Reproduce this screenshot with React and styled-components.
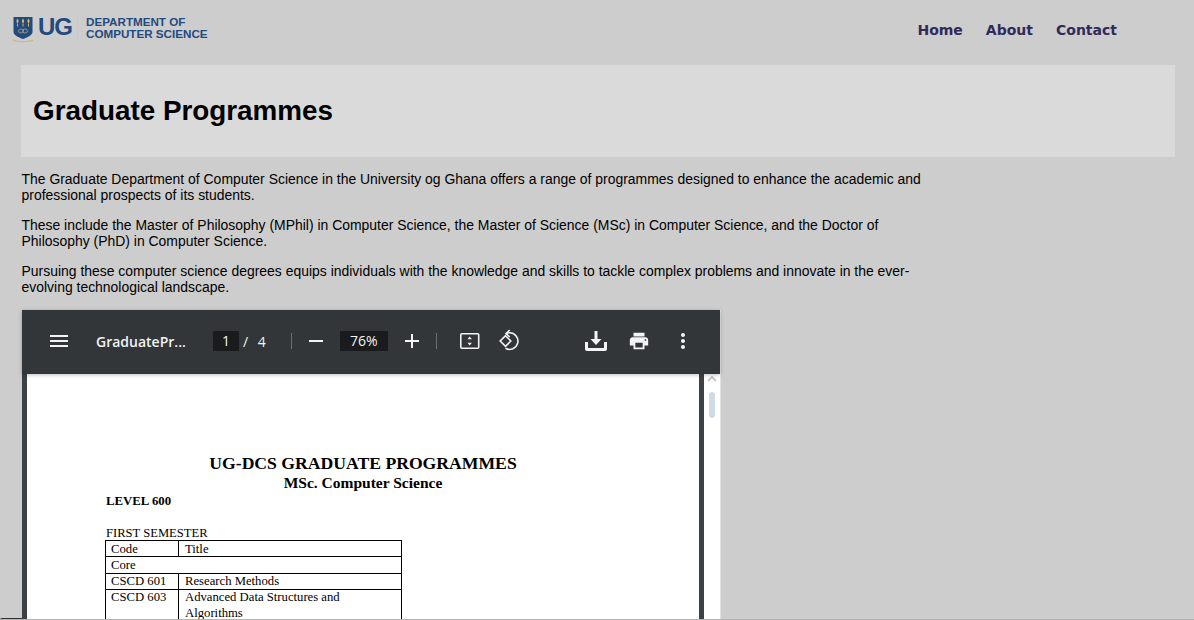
import React from "react";
import styled, { createGlobalStyle } from "styled-components";

const Global = createGlobalStyle`
  html, body { margin: 0; padding: 0; height: 620px; overflow: hidden; background: #cdcdcd; }
  #root { height: 620px; overflow: hidden; }
  * { box-sizing: border-box; }
`;
const Page = styled.div`
  height: 620px; overflow: hidden; display: flex; flex-direction: column; position: relative;
  font-family: "Liberation Sans", Arial, sans-serif; color: #000;
`;
const BottomEdge = styled.div`
  position: absolute; left: 0; right: 0; bottom: 0; height: 1px; background: #b4b4b4;
`;
const CornerShade = styled.div`
  position: absolute; left: 0; bottom: 0; width: 22px; height: 2px; background: #2e3134; border-top-left-radius: 2px;
`;
const Header = styled.header`
  height: 65px; flex: none; display: flex; justify-content: space-between; align-items: flex-start;
  padding: 15px 77px 0 12px;
`;
const Logo = styled.div`display: flex; align-items: flex-start;`;
const LogoMark = styled.span`
  font: bold 24px/23px "Liberation Sans", sans-serif; color: #234a7d; margin-left: 4px; width: 39px; letter-spacing: -1px;
`;
const LogoRule = styled.span`flex: none; width: 1px; height: 24px; background: #d3c9a8; margin: 1px 8px 0 0;`;
const LogoText = styled.div`
  font: bold 11.65px/12px "Liberation Sans", sans-serif; color: #234a7d; padding-top: 1px;
  span { display: block; white-space: nowrap; }
`;
const Nav = styled.nav`display: flex; gap: 23px; padding-top: 6px;`;
const NavLink = styled.a`
  font: bold 14px/18px "DejaVu Sans", Verdana, sans-serif; color: #2f2a5a;
`;
const Banner = styled.div`
  height: 92px; flex: none; margin: 0 19px 0 21px; padding: 0 12px; background: #dadada;
  display: flex; align-items: center;
`;
const Title = styled.h1`margin: 0; font: bold 27.84px/32px "Liberation Sans", sans-serif;`;
const Body = styled.main`padding: 14px 0 0 21.5px; flex: 1; min-height: 0;`;
const Para = styled.p`
  margin: 0 0 14px; width: 905px; font-size: 13.945px; line-height: 16px;
`;
const Viewer = styled.div`
  width: 699px; height: 320px; margin: 15px 0 0 0.5px; background: #3e4144; display: flex; flex-direction: column;
  border-right: 1px solid #e2e2e2;
`;
const Toolbar = styled.div`
  height: 64px; flex: none; padding-bottom: 2px; background: #323639; color: #f1f3f4; display: flex; align-items: center;
  position: relative; z-index: 1; box-shadow: 0 1px 4px rgba(0,0,0,.25);
  font-family: "Open Sans", "Noto Sans", sans-serif;
`;
const IconSlot = styled.span`
  display: flex; flex: none; width: ${p => p.$w || 24}px; margin-left: ${p => p.$ml || 0}px;
  align-items: center; justify-content: center;
`;
const FileName = styled.span`
  flex: none; width: 100px; margin-left: 25px; font-size: 14px; font-weight: 600; white-space: nowrap;
`;
const Field = styled.span`
  flex: none; height: 20px; width: ${p => p.$w}px; margin-left: ${p => p.$ml}px; background: #191b1c;
  font-size: 14px; line-height: 20px; text-align: center;
`;
const PageOf = styled.span`flex: none; margin-left: 4px; font-size: 14px; word-spacing: 6px;`;
const Sep = styled.span`flex: none; width: 1px; height: 16px; background: #6b6f72; margin-left: ${p => p.$ml}px;`;
const Stage = styled.div`flex: 1; min-height: 0; display: flex; overflow: hidden;`;
const Sheet = styled.div`
  flex: none; width: 672px; margin-left: 5px; background: #fff; color: #000; height: 400px;
  padding: 80px 0 0 79px; font-family: "Liberation Serif", "Times New Roman", serif; font-size: 12.7px;
`;
const DocTitle = styled.div`width: 514px; text-align: center; font-weight: bold; font-size: 17.65px; line-height: 18px;`;
const DocSub = styled.div`width: 514px; text-align: center; font-weight: bold; font-size: 15.5px; line-height: 22px;`;
const Level = styled.div`font-weight: bold; line-height: 14px; font-size: 12.8px;`;
const Sem = styled.div`line-height: 14px; margin-top: 18px; font-size: 12.6px;`;
const DocTable = styled.div`
  width: 297px; border: 1px solid #000; border-bottom: 0; margin-left: -1px;
`;
const Row = styled.div`
  display: grid; grid-template-columns: ${p => p.$full ? "1fr" : "72px 1fr"}; border-bottom: 1px solid #000;
  height: ${p => p.$h}px;
`;
const Cell = styled.div`
  padding: ${p => p.$pad || 0}px 5px 0; line-height: ${p => p.$tall ? "16px" : "15px"};
  margin-top: ${p => p.$tall ? "-1px" : "0"};
  & + & { border-left: 1px solid #000; padding-left: 6px; }
`;
const Scrollbar = styled.div`
  flex: none; width: 16px; margin-left: 5px; background: #fff; display: flex; flex-direction: column; align-items: center;
`;
const Thumb = styled.div`width: 6px; height: 26px; margin-top: 10px; border-radius: 3px; background: #cfdbe6;`;
const Arrow = styled.svg`margin-top: 2px; flex: none;`;

const sw = { fill: "none", stroke: "currentColor" };
const Menu = () => <svg width="24" height="24" viewBox="0 0 24 24" fill="currentColor"><path d="M3 18h18v-2H3v2zm0-5h18v-2H3v2zm0-7v2h18V6H3z"/></svg>;
const Minus = () => <svg width="24" height="24" viewBox="0 0 24 24" fill="currentColor"><path d="M19 13H5v-2h14v2z"/></svg>;
const Plus = () => <svg width="24" height="24" viewBox="0 0 24 24" fill="currentColor"><path d="M19 13h-6v6h-2v-6H5v-2h6V5h2v6h6v2z"/></svg>;
const Fit = () => <svg width="24" height="24" viewBox="0 0 24 24" {...sw} strokeWidth="1.6"><rect x="2.8" y="4.8" width="17.9" height="14.4" rx="1"/><path d="M11.700 7.500l2.200 2.700H9.500zM11.700 16.500l2.200-2.700H9.500z" fill="currentColor" stroke="none"/></svg>;
const Rotate = () => <svg width="24" height="24" viewBox="0 0 24 24" {...sw} strokeWidth="1.6"><path d="M8.500 6.700L13.800 12 8.500 17.300 3.200 12z" /><path d="M9 4.700C10 4 11 3.800 12.500 3.800a8.300 8.300 0 1 1-4 15.500" /><path d="M12.700 1l-3.700 3.700 3.700 3.300" /></svg>;
const Download = () => <svg width="24" height="24" viewBox="0 0 24 24" fill="currentColor"><path d="M10.500 2h3v8h4L12 16 6.500 10h4z"/><path d="M1 13h3v6h16v-6h3v7a2 2 0 0 1-2 2H3a2 2 0 0 1-2-2z"/></svg>;
const Print = () => <svg width="22" height="22" viewBox="0 0 24 24" fill="currentColor"><path d="M19 8H5c-1.660 0-3 1.340-3 3v6h4v4h12v-4h4v-6c0-1.660-1.340-3-3-3zm-3 11H8v-5h8v5zm3-7c-.550 0-1-.450-1-1s.450-1 1-1 1 .450 1 1-.450 1-1 1zm-1-9H6v4h12V3z"/></svg>;
const More = () => <svg width="24" height="24" viewBox="0 0 24 24" fill="currentColor"><path d="M12 8c1.100 0 2-.900 2-2s-.900-2-2-2-2 .900-2 2 .900 2 2 2zm0 2c-1.100 0-2 .900-2 2s.900 2 2 2 2-.900 2-2-.900-2-2-2zm0 6c-1.100 0-2 .900-2 2s.900 2 2 2 2-.900 2-2-.900-2-2-2z"/></svg>;
const Crest = () => (
  <svg width="22" height="28" viewBox="0 0 22 28">
    <path d="M1.500 2h19v15c0 3.500-5.500 5.500-9.500 7-4-1.500-9.500-3.500-9.500-7z" fill="#234a7d"/>
    <path d="M5.500 3.500c1.500 2 1.500 3.500 0 5-1.500-1.500-1.500-3 0-5zM11 3.500c1.500 2 1.500 3.500 0 5-1.500-1.500-1.500-3 0-5zM16.500 3.500c1.500 2 1.500 3.500 0 5-1.500-1.500-1.500-3 0-5z" fill="#d8b95a"/>
    <path d="M5.500 8.500v3M11 8.500v3M16.500 8.500v3" stroke="#d8b95a" strokeWidth="1"/>
    <ellipse cx="9" cy="16" rx="2.500" ry="2" fill="none" stroke="#a9a78a" strokeWidth=".8"/>
    <ellipse cx="13" cy="16" rx="2.500" ry="2" fill="none" stroke="#a9a78a" strokeWidth=".8"/>
    <path d="M1 24.500c6 2 14 2 20 0v1.500c-6 1.500-14 1.500-20 0z" fill="#cdb878"/>
  </svg>
);

export default function App() {
  return (
    <>
      <Global />
      <Page>
        <Header>
          <Logo>
            <Crest />
            <LogoMark>UG</LogoMark>
            <LogoRule />
            <LogoText><span>DEPARTMENT OF</span><span>COMPUTER SCIENCE</span></LogoText>
          </Logo>
          <Nav>
            <NavLink>Home</NavLink>
            <NavLink>About</NavLink>
            <NavLink>Contact</NavLink>
          </Nav>
        </Header>
        <Banner><Title>Graduate Programmes</Title></Banner>
        <Body>
          <Para>The Graduate Department of Computer Science in the University og Ghana offers a range of programmes designed to enhance the academic and professional prospects of its students.</Para>
          <Para>These include the Master of Philosophy (MPhil) in Computer Science, the Master of Science (MSc) in Computer Science, and the Doctor of Philosophy (PhD) in Computer Science.</Para>
          <Para>Pursuing these computer science degrees equips individuals with the knowledge and skills to tackle complex problems and innovate in the ever-evolving technological landscape.</Para>
          <Viewer>
            <Toolbar>
              <IconSlot $ml={25}><Menu /></IconSlot>
              <FileName>GraduatePr...</FileName>
              <Field $w={26} $ml={17}>1</Field>
              <PageOf>/ 4</PageOf>
              <Sep $ml={25} />
              <IconSlot $ml={12}><Minus /></IconSlot>
              <Field $w={48} $ml={12}>76%</Field>
              <IconSlot $ml={12}><Plus /></IconSlot>
              <Sep $ml={12} />
              <IconSlot $ml={21}><Fit /></IconSlot>
              <IconSlot $ml={15}><Rotate /></IconSlot>
              <IconSlot $ml={63}><Download /></IconSlot>
              <IconSlot $ml={19}><Print /></IconSlot>
              <IconSlot $ml={20}><More /></IconSlot>
            </Toolbar>
            <Stage>
              <Sheet>
                <DocTitle>UG-DCS GRADUATE PROGRAMMES</DocTitle>
                <DocSub>MSc. Computer Science</DocSub>
                <Level>LEVEL 600</Level>
                <Sem>FIRST SEMESTER</Sem>
                <DocTable>
                  <Row $h={16}><Cell $pad={1}>Code</Cell><Cell $pad={1}>Title</Cell></Row>
                  <Row $full $h={17}><Cell $pad={1}>Core</Cell></Row>
                  <Row $h={16}><Cell>CSCD 601</Cell><Cell>Research Methods</Cell></Row>
                  <Row $h={33}><Cell>CSCD 603</Cell><Cell $tall>Advanced Data Structures and<br />Algorithms</Cell></Row>
                </DocTable>
              </Sheet>
              <Scrollbar>
                <Arrow width="10" height="6" viewBox="0 0 10 6"><path d="M1 5l4-4 4 4" fill="none" stroke="#c8c8c8" strokeWidth="2"/></Arrow>
                <Thumb />
              </Scrollbar>
            </Stage>
          </Viewer>
        </Body>
        <CornerShade />
        <BottomEdge />
      </Page>
    </>
  );
}
